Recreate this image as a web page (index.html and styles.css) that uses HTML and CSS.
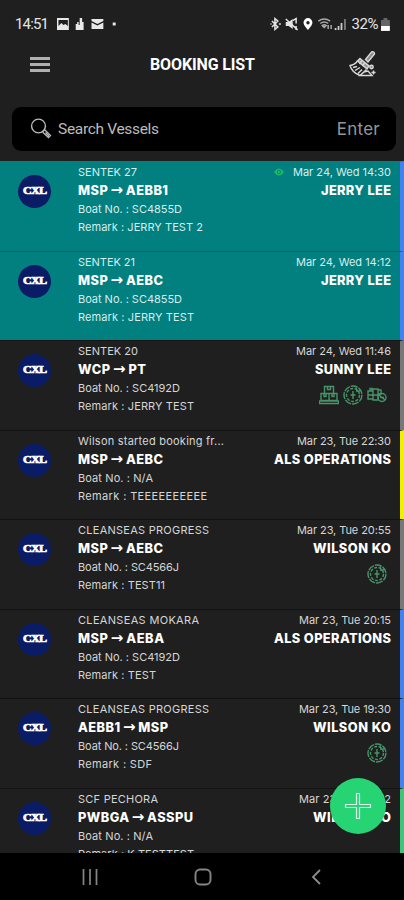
FILE: index.html
```html
<!DOCTYPE html>
<html lang="en">
<head>
<meta charset="utf-8">
<title>Booking List</title>
<link rel="stylesheet" href="styles.css">
</head>
<body>
<svg class="defs" width="0" height="0">
  <symbol id="boxes" viewBox="0 0 20 20"><path d="M5.500 1.500h9v7h-9zM8.500 1.500v3h3v-3M2 8.500h8v7H2zM10 8.500h8v7h-8zM5 8.500v3h2v-3M13 8.500v3h2v-3M.5 16h19v2.500H.5z"/></symbol>
  <symbol id="clock" viewBox="0 0 20 20"><circle cx="10" cy="10" r="9" stroke-dasharray="7 1"/><circle cx="10" cy="10" r="6.500" stroke-dasharray="3 1.500"/><path d="M10 6v8M7.500 10h5M13 2.500l1 4 4-1"/></symbol>
  <symbol id="crew" viewBox="0 0 20 20"><path d="M1 6h5v8H1zM6 4h5v11H6zM1 10h10M3 6V3.500h2V6M11 5h3v4h-3"/><circle cx="15" cy="12.500" r="4"/><path d="M13 12.500h4M12 10l6 5"/></symbol>
</svg>
<div class="phone">
  <header class="status">
    <span class="time" data-w="34">14:51</span>
    <svg class="status-left" width="70" height="14" viewBox="0 0 70 14">
      <path fill="#e8e8e8" fill-rule="evenodd" d="M1 1h12v12H1zM2.500 3v6l3-3 2 2 2-1 2.500 2V3zM20 13V7h1.500V5H23v3h1V1h2.500v4H28v8zM36 2h12v2l-6 3-6-3zM36 5.500l6 3 6-3V12H36z"/>
      <rect x="57.500" y="5.500" width="3" height="3" fill="#e8e8e8"/>
    </svg>
    <svg class="status-right" width="80" height="14" viewBox="0 0 80 14">
      <g fill="none" stroke="#e4e4e4" stroke-width="1.500">
        <path d="M3 4l6 6-3 2.500v-11L9 4l-6 6M1.500 7h1M10 7h2"/>
        <path d="M17 2l12 11M24 3.500l3.500-2v5M27.500 9v4" />
      </g>
      <path fill="#e4e4e4" d="M17 5h3l4-3v10l-4-3h-3z"/>
      <path fill="#fff" fill-rule="evenodd" d="M39.500 1a4.500 4.500 0 0 0-4.500 4.500c0 3 4.500 7.500 4.500 7.500S44 8.500 44 5.500A4.500 4.500 0 0 0 39.500 1zm0 3a1.700 1.700 0 1 1 0 3.400 1.700 1.700 0 0 1 0-3.400z"/>
      <path d="M50 4q6-4 12 0M52 6.500q4-3 8 0M54 8.500q2-1.500 4 0l-2 2zM60 8v4M63 12V8" fill="none" stroke="#aaa" stroke-width="1.500"/>
      <path d="M67.500 13v-2M70.500 13V9M73.500 13V6" stroke="#ccc" stroke-width="1.800"/><path d="M77 13V2" stroke="#777" stroke-width="2"/>
    </svg>
    <span class="pct" data-w="27">32%</span>
    <svg class="battery" width="9" height="13" viewBox="0 0 9 13"><path fill="#666" d="M0 2h2.500V0h4v2H9v6H0z"/><path fill="#fff" d="M0 8h9v5H0z"/></svg>
  </header>

  <div class="appbar">
    <div class="menu"><i></i><i></i><i></i></div>
    <h1 data-w="105">BOOKING LIST</h1>
    <svg class="brush" width="28" height="28" viewBox="0 0 28 28" fill="none" stroke="#d8d8d8" stroke-width="1.400">
      <path d="M16.500 9.500l6-7.500q3-1 3 2l-6.500 8z" fill="#8a8a8a"/>
      <path d="M11 8.500l9 7.500-2 3-9.500-8z" fill="#999"/>
      <path d="M8.500 11q-3 4-7.500 4.500 2 7 10 10l6.500-6M4 17.500l4-1M6 20.500l5-3M9 23.500l4-4M12.500 11l-2 3M15.500 13l-2 3M11 25.500h12l-4-4.500-4 1z"/>
      <circle cx="22.500" cy="17" r="1.700" fill="#8a8a8a"/><path d="M24.500 20.500v4M22.500 22.500h4"/>
    </svg>
  </div>

  <div class="search">
    <svg width="22" height="22" viewBox="0 0 22 22" fill="none" stroke="#bbb"><circle cx="8.500" cy="8" r="6.900" stroke-width="1.400"/><path d="M13 13l2-1 5.500 5.500-2 2-5.500-5z" stroke-width="1.300"/><path d="M15.500 14.500l3.500 3.500" stroke-width="1.500"/></svg>
    <span class="placeholder" data-w="101">Search Vessels</span>
    <span class="enter" data-w="43">Enter</span>
  </div>

  <main class="list">
    <article class="row teal blue">
      <div class="logo"><b>CXL</b></div>
      <div class="info"><p data-w="59">SENTEK 27</p><h2 data-w="90">MSP <span class="arrow">→</span> AEBB1</h2><p data-w="104">Boat No. : SC4855D</p><p data-w="125">Remark : JERRY TEST 2</p></div>
      <div class="meta"><p><svg class="eye" width="10" height="8" viewBox="0 0 10 8"><path d="M0 4q5-7 10 0-5 7-10 0z" fill="#1cbd68"/><circle cx="5" cy="4" r="1.700" fill="none" stroke="#078568"/></svg><span data-w="98">Mar 24, Wed 14:30</span></p><h2 data-w="70">JERRY LEE</h2></div>
    </article>
    <article class="row teal blue">
      <div class="logo"><b>CXL</b></div>
      <div class="info"><p data-w="57">SENTEK 21</p><h2 data-w="85">MSP <span class="arrow">→</span> AEBC</h2><p data-w="104">Boat No. : SC4855D</p><p data-w="116">Remark : JERRY TEST</p></div>
      <div class="meta"><p><span data-w="95">Mar 24, Wed 14:12</span></p><h2 data-w="70">JERRY LEE</h2></div>
    </article>
    <article class="row gray">
      <div class="logo"><b>CXL</b></div>
      <div class="info"><p data-w="60">SENTEK 20</p><h2 data-w="68">WCP <span class="arrow">→</span> PT</h2><p data-w="102">Boat No. : SC4192D</p><p data-w="116">Remark : JERRY TEST</p></div>
      <div class="meta"><p><span data-w="95">Mar 24, Wed 11:46</span></p><h2 data-w="76">SUNNY LEE</h2><div class="icons"><svg><use href="#boxes"/></svg><svg><use href="#clock"/></svg><svg><use href="#crew"/></svg></div></div>
    </article>
    <article class="row yellow">
      <div class="logo"><b>CXL</b></div>
      <div class="info"><p data-w="146">Wilson started booking fr...</p><h2 data-w="85">MSP <span class="arrow">→</span> AEBC</h2><p data-w="75">Boat No. : N/A</p><p data-w="129">Remark : TEEEEEEEEEE</p></div>
      <div class="meta"><p><span data-w="94">Mar 23, Tue 22:30</span></p><h2 data-w="117">ALS OPERATIONS</h2></div>
    </article>
    <article class="row gray">
      <div class="logo"><b>CXL</b></div>
      <div class="info"><p data-w="131">CLEANSEAS PROGRESS</p><h2 data-w="85">MSP <span class="arrow">→</span> AEBC</h2><p data-w="101">Boat No. : SC4566J</p><p data-w="87">Remark : TEST11</p></div>
      <div class="meta"><p><span data-w="94">Mar 23, Tue 20:55</span></p><h2 data-w="78">WILSON KO</h2><div class="icons"><svg><use href="#clock"/></svg></div></div>
    </article>
    <article class="row blue">
      <div class="logo"><b>CXL</b></div>
      <div class="info"><p data-w="121">CLEANSEAS MOKARA</p><h2 data-w="86">MSP <span class="arrow">→</span> AEBA</h2><p data-w="102">Boat No. : SC4192D</p><p data-w="78">Remark : TEST</p></div>
      <div class="meta"><p><span data-w="92">Mar 23, Tue 20:15</span></p><h2 data-w="117">ALS OPERATIONS</h2></div>
    </article>
    <article class="row blue">
      <div class="logo"><b>CXL</b></div>
      <div class="info"><p data-w="131">CLEANSEAS PROGRESS</p><h2 data-w="90">AEBB1 <span class="arrow">→</span> MSP</h2><p data-w="101">Boat No. : SC4566J</p><p data-w="74">Remark : SDF</p></div>
      <div class="meta"><p><span data-w="92">Mar 23, Tue 19:30</span></p><h2 data-w="78">WILSON KO</h2><div class="icons"><svg><use href="#clock"/></svg></div></div>
    </article>
    <article class="row green">
      <div class="logo"><b>CXL</b></div>
      <div class="info"><p data-w="80">SCF PECHORA</p><h2 data-w="115">PWBGA <span class="arrow">→</span> ASSPU</h2><p data-w="75">Boat No. : N/A</p><p data-w="116">Remark : K TESTTEST</p></div>
      <div class="meta"><p><span data-w="92">Mar 23, Tue 19:12</span></p><h2 data-w="78">WILSON KO</h2></div>
    </article>
  </main>

  <div class="fab"><svg width="28" height="28" viewBox="0 0 28 28"><path d="M12.500 1.500h3v11h11v3h-11v11h-3v-11h-11v-3h11z" fill="none" stroke="#dcffe9" stroke-width="1.200" stroke-linejoin="round"/></svg></div>

  <nav class="nav">
    <svg width="16" height="18" viewBox="0 0 16 18"><path d="M1.500 1v16M8 1v16M14.500 1v16" stroke="#858585" stroke-width="1.700"/></svg>
    <svg width="18" height="18" viewBox="0 0 18 18"><rect x="1.500" y="1.500" width="15" height="15" rx="4.500" fill="none" stroke="#858585" stroke-width="1.900"/></svg>
    <svg width="10" height="18" viewBox="0 0 10 18"><path d="M9 2L2 9l7 7" fill="none" stroke="#8c8c8c" stroke-width="1.800"/></svg>
  </nav>
</div>
<script src="fit.js"></script>
</body>
</html>
```
FILE: styles.css
```css
* { box-sizing: border-box; margin: 0; padding: 0; }
body { background: #1f1f1f; }
.defs { position: absolute; }
.phone {
  position: relative;
  width: 404px;
  height: 900px;
  overflow: hidden;
  display: flex;
  flex-direction: column;
  background: #1f1f1f;
  color: #fff;
  font-family: Inter, "Liberation Sans", sans-serif;
}
[data-w] { white-space: pre; }
.status {
  height: 42px;
  padding: 6px 14px 0 15px;
  display: flex;
  align-items: center;
  font: 15px/20px Roboto, sans-serif;
  color: #e4e4e4;
}
.time { width: 34px; }
.status-left { margin-left: 7px; }
.status-right { margin-left: 144px; }
.pct { margin-left: 4px; width: 27px; }
.battery { margin-left: 3px; }
.appbar {
  height: 46px;
  padding: 0 27px 2px 30px;
  display: flex;
  align-items: center;
}
.menu { width: 120px; display: grid; gap: 3px; }
.menu i { display: block; width: 20px; height: 3px; background: #b0b0b0; }
.appbar h1 { flex: none; padding-top: 1px; font: 700 16px/20px Roboto, sans-serif; }
.brush { margin-left: auto; }
.search {
  flex: none;
  height: 44px;
  margin: 19px 8px 10px 12px;
  padding: 0 16px 0 18px;
  border-radius: 9px;
  background: #000;
  display: flex;
  align-items: center;
}
.placeholder { margin-left: 6px; font: 15.500px/20px Roboto, sans-serif; color: #bcbcbc; }
.enter { margin-left: auto; font-size: 17px; color: #969696; }
.list { flex: none; height: 692px; overflow: hidden; }
.row {
  height: 89.500px;
  display: flex;
  border-top: 1px solid #121212;
  border-right: 4px solid;
  padding-right: 9px;
}
.teal { background: #027f7f; border-top-color: #066363; }
.row:first-child { border-top-color: #027f7f; }
.blue { border-right-color: #4481f0; }
.gray { border-right-color: #787878; }
.yellow { border-right-color: #f0f000; }
.green { border-right-color: #3fc479; }
.logo {
  flex: none;
  width: 33px;
  height: 33px;
  margin: 13px 27px 0 18px;
  border-radius: 50%;
  background: #0a1c66;
  display: flex;
  align-items: center;
  justify-content: center;
}
.logo b {
  padding-bottom: 1px;
  font: 700 10px/12px "Liberation Serif", serif;
  letter-spacing: -.6px;
  -webkit-text-stroke: .7px #fff;
  transform: scaleX(1.200);
}
.info { flex: 1; }
.row p { font-size: 11px; line-height: 18px; height: 18px; color: #d6d6d6; }
.row.teal p { color: #d5eeee; }
.row h2 { font-size: 12.800px; font-weight: 800; line-height: 19px; height: 18px; }
.arrow { font-family: "DejaVu Sans", sans-serif; font-size: 15px; line-height: 1; margin: 0 -1px; }
.info, .meta { padding-top: 1px; }
.meta { display: flex; flex-direction: column; align-items: flex-end; }
.meta p { display: flex; align-items: center; }
.info h2 + p { margin-top: 1px; }
.eye { margin-right: 9px; }
.icons { display: flex; gap: 4px; margin: 7px 4px 0 0; }
.icons svg { width: 20px; height: 20px; fill: none; stroke: #46946a; stroke-width: 1.400; }
.fab {
  position: absolute;
  left: 330px;
  top: 778px;
  width: 56px;
  height: 56px;
  border-radius: 50%;
  background: #26d474;
  display: flex;
  align-items: center;
  justify-content: center;
}
.nav {
  flex: none;
  height: 47px;
  padding: 0 83px 0 82px;
  background: #000;
  display: flex;
  align-items: center;
  justify-content: space-between;
}
.nav svg:nth-child(2) { margin-right: 3px; }
```
FILE: fit.js
```js
document.querySelectorAll('[data-w]').forEach(function (el) {
  var range = document.createRange();
  range.selectNodeContents(el);
  var natural = range.getBoundingClientRect().width;
  var count = el.textContent.length;
  var spacing = (parseFloat(el.dataset.w) - natural) / (count - 1);
  el.style.letterSpacing = spacing + 'px';
  if (el.closest('.meta')) el.style.marginRight = -spacing + 'px';
});
```
